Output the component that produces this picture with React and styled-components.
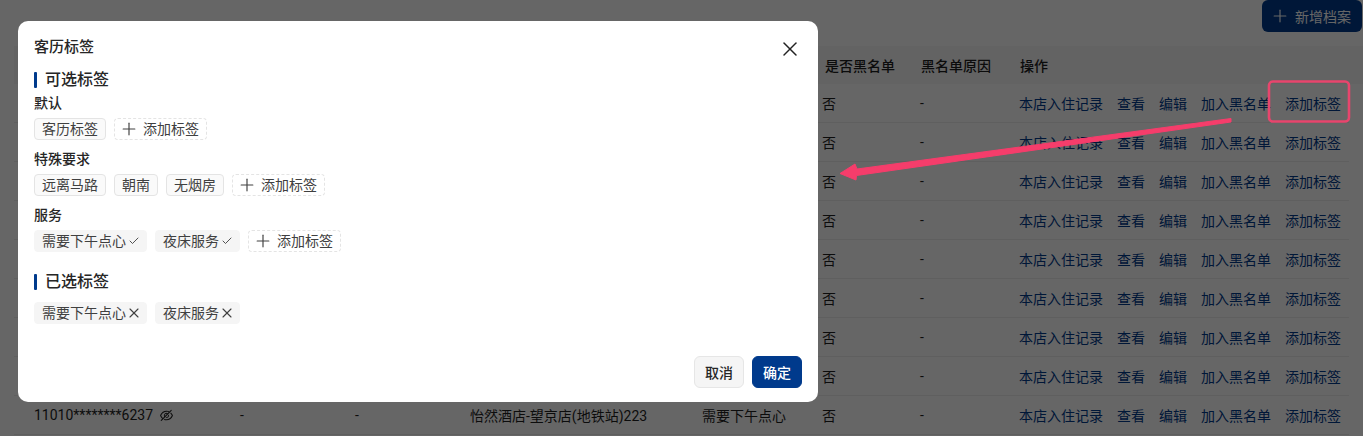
import React from "react";
import styled, { createGlobalStyle } from "styled-components";
import { Plus, X, Check } from "lucide-react";
import { AiOutlineEyeInvisible } from "react-icons/ai";

const Global = createGlobalStyle`
  html, body { margin: 0; padding: 0; background: #fff; }
  body { font-family: "Roboto", "Noto Sans CJK SC", sans-serif; color: #1f1f1f; font-size: 14px; }
`;

const Page = styled.div`
  position: relative;
  width: 1363px;
  height: 436px;
  overflow: hidden;
  background: #fff;
`;

const TopBar = styled.div`
  display: flex;
  justify-content: flex-end;
  height: 46px;
  padding: 0 1px 0 0;
  box-sizing: border-box;
  align-items: flex-start;
`;

const AddButton = styled.button`
  display: flex;
  align-items: center;
  gap: 5px;
  width: 100px;
  height: 32px;
  padding: 0 0 0 8px;
  box-sizing: border-box;
  border: 0;
  border-radius: 6px;
  background: #003a8c;
  color: #fff;
  font: inherit;
  white-space: nowrap;
`;

const HeaderRow = styled.div`
  display: grid;
  grid-template-columns: 791px 96px 99px 330px;
  height: 38px;
  margin-left: 14px;
  padding-left: 20px;
  align-items: center;
  background: #f7f7f7;
  font-weight: 500;
`;

const Row = styled.div`
  display: grid;
  grid-template-columns: 206px 115px 115px 232px 120px 98px 99px 330px;
  height: 39px;
  margin-left: 14px;
  padding-left: 20px;
  margin-right: 14px;
  align-items: center;
  border-bottom: 1px solid #eee;
  box-sizing: border-box;
  white-space: nowrap;
`;

const Cell = styled.div`
  display: flex;
  align-items: center;
  gap: 6px;
  white-space: nowrap;
`;

const Actions = styled.div`
  display: flex;
  gap: 14px;
  white-space: nowrap;
`;

const Link = styled.span`
  color: #003a8c;
`;

const Mask = styled.div`
  position: absolute;
  inset: 0;
  background: rgba(0, 0, 0, 0.6);
`;

const Modal = styled.div`
  position: absolute;
  left: 18px;
  top: 21px;
  width: 800px;
  height: 381px;
  box-sizing: border-box;
  padding: 16px 16px 14px;
  background: #fff;
  border-radius: 10px;
  display: flex;
  flex-direction: column;
`;

const ModalHead = styled.div`
  display: flex;
  align-items: center;
  justify-content: space-between;
  height: 20px;
  margin-bottom: 10px;
`;

const ModalTitle = styled.div`
  font-size: 15px;
  line-height: 20px;
  font-weight: 500;
  color: #262626;
`;

const Close = styled.span`
  display: flex;
  margin-top: 4px;
  color: #222;
`;

const SectionTitle = styled.div`
  display: flex;
  align-items: center;
  gap: 8px;
  height: 20px;
  font-size: 16px;
  line-height: 20px;
  font-weight: 500;
  color: #262626;
  margin-top: ${(p) => p.$top || 0}px;
  &::before {
    content: "";
    width: 3px;
    height: 16px;
    border-radius: 1px;
    background: #003a8c;
  }
`;

const GroupLabel = styled.div`
  font-size: 14px;
  line-height: 20px;
  font-weight: 500;
  color: #262626;
  margin-top: ${(p) => p.$top}px;
`;

const Tags = styled.div`
  display: flex;
  gap: 8px;
  margin-top: ${(p) => p.$top}px;
`;

const Tag = styled.span`
  display: inline-flex;
  align-items: center;
  height: 22px;
  box-sizing: border-box;
  padding: 0 7px;
  font-size: 14px;
  line-height: 20px;
  border-radius: 4px;
  color: #404040;
  white-space: nowrap;
  background: #fafafa;
  border: 1px solid #e4e4e4;
`;

const AddTagBox = styled(Tag)`
  background: #fff;
  border-style: dashed;
  padding-left: 4px;
  gap: 4px;
`;

const ActiveTag = styled(Tag)`
  background: #f5f5f5;
  border-color: #f5f5f5;
  padding-right: ${(p) => p.$right}px;
  gap: ${(p) => p.$gap}px;
`;

const Footer = styled.div`
  margin-top: auto;
  display: flex;
  justify-content: flex-end;
  gap: 8px;
`;

const Btn = styled.button`
  width: 50px;
  height: 32px;
  padding: 0;
  box-sizing: border-box;
  border-radius: 6px;
  font: inherit;
  font-weight: 500;
  border: 1px solid ${(p) => (p.$primary ? "#003a8c" : "#e6e6e6")};
  background: ${(p) => (p.$primary ? "#003a8c" : "#f5f5f5")};
  color: ${(p) => (p.$primary ? "#fff" : "#262626")};
`;

const Annotation = styled.svg`
  position: absolute;
  inset: 0;
  pointer-events: none;
`;

const rows = [0, 1, 2, 3, 4, 5, 6, 7, 8];

const AddTag = () => (
  <AddTagBox>
    <Plus size={20} strokeWidth={1.4} />
    添加标签
  </AddTagBox>
);

const Checked = ({ children }) => (
  <ActiveTag $right={6} $gap={2}>
    {children}
    <Check size={12} strokeWidth={1.8} />
  </ActiveTag>
);

const Removable = ({ children }) => (
  <ActiveTag $right={4} $gap={0}>
    {children}
    <X size={16} strokeWidth={1.7} />
  </ActiveTag>
);

export default function App() {
  return (
    <Page>
      <Global />
      <TopBar>
        <AddButton>
          <Plus size={20} strokeWidth={1.4} />
          新增档案
        </AddButton>
      </TopBar>
      <HeaderRow>
        <Cell />
        <Cell>是否黑名单</Cell>
        <Cell>黑名单原因</Cell>
        <Cell>操作</Cell>
      </HeaderRow>
      {rows.map((r) => (
        <Row key={r}>
          <Cell>
            11010********6237 <AiOutlineEyeInvisible size={15} />
          </Cell>
          <Cell>-</Cell>
          <Cell>-</Cell>
          <Cell>怡然酒店-望京店(地铁站)223</Cell>
          <Cell>需要下午点心</Cell>
          <Cell>否</Cell>
          <Cell>-</Cell>
          <Actions>
            <Link>本店入住记录</Link>
            <Link>查看</Link>
            <Link>编辑</Link>
            <Link>加入黑名单</Link>
            <Link>添加标签</Link>
          </Actions>
        </Row>
      ))}
      <Mask />
      <Modal>
        <ModalHead>
          <ModalTitle>客历标签</ModalTitle>
          <Close>
            <X size={24} strokeWidth={1.5} />
          </Close>
        </ModalHead>
        <SectionTitle $top={3}>可选标签</SectionTitle>
        <GroupLabel $top={3}>默认</GroupLabel>
        <Tags $top={5}>
          <Tag>客历标签</Tag>
          <AddTag />
        </Tags>
        <GroupLabel $top={9}>特殊要求</GroupLabel>
        <Tags $top={5}>
          <Tag>远离马路</Tag>
          <Tag>朝南</Tag>
          <Tag>无烟房</Tag>
          <AddTag />
        </Tags>
        <GroupLabel $top={9}>服务</GroupLabel>
        <Tags $top={5}>
          <Checked>需要下午点心</Checked>
          <Checked>夜床服务</Checked>
          <AddTag />
        </Tags>
        <SectionTitle $top={20}>已选标签</SectionTitle>
        <Tags $top={10}>
          <Removable>需要下午点心</Removable>
          <Removable>夜床服务</Removable>
        </Tags>
        <Footer>
          <Btn>取消</Btn>
          <Btn $primary>确定</Btn>
        </Footer>
      </Modal>
      <Annotation width="1363" height="436" viewBox="0 0 1363 436">
        <rect x="1269" y="81.5" width="80" height="40" rx="4" fill="none" stroke="#e8456d" strokeWidth="2.6" />
        <path d="M1231 118.5 L857 169 L855 164 L840 173.5 L856 180 L856.5 175.5 L1231 122 Z" fill="#f53d6b" stroke="#f53d6b" strokeWidth="1" strokeLinejoin="round" />
      </Annotation>
    </Page>
  );
}
